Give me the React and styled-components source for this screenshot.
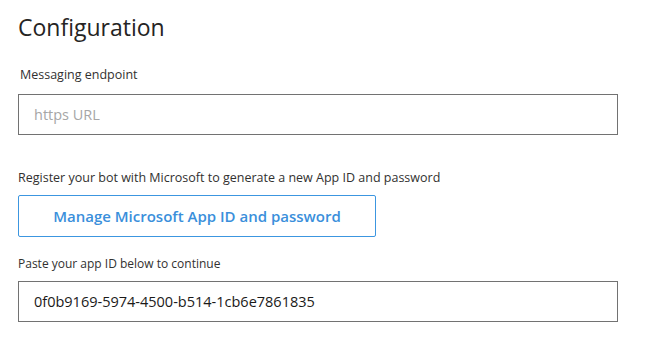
import React from "react";
import styled, { createGlobalStyle } from "styled-components";

const GlobalStyle = createGlobalStyle`
  body {
    margin: 0;
    background: #ffffff;
    font-family: "Open Sans", "Noto Sans", sans-serif;
    color: #252423;
  }
`;

const Page = styled.div`
  width: 600px;
  padding: 11px 0 0 18px;
  display: flex;
  flex-direction: column;
`;

const Title = styled.h1`
  margin: 0;
  font-size: 23px;
  font-weight: 400;
  line-height: 32px;
  color: #252423;
`;

const Label = styled.label`
  display: block;
  font-size: ${(p) => p.$size || "12.5px"};
  line-height: 18px;
  color: #323130;
  margin: ${(p) => p.$margin || "0"};
`;

const Field = styled.div`
  box-sizing: border-box;
  width: 600px;
  height: 41px;
  border: 1px solid #727272;
  display: flex;
  align-items: center;
  padding: 0 15px;
  font-size: 14.5px;
  color: ${(p) => (p.$placeholder ? "#a6a6a6" : "#1b1a19")};
`;

const ManageButton = styled.button`
  box-sizing: border-box;
  width: 358px;
  height: 42px;
  margin-top: 8px;
  border: 1px solid #3c96e0;
  border-radius: 2px;
  background: #ffffff;
  color: #3a8fdb;
  font-family: "Open Sans", "Noto Sans", sans-serif;
  font-size: 15px;
  font-weight: 600;
  cursor: pointer;
`;

export default function App() {
  return (
    <>
      <GlobalStyle />
      <Page>
        <Title>Configuration</Title>
        <Label $margin="23px 0 10px 2px">Messaging endpoint</Label>
        <Field $placeholder>https URL</Field>
        <Label $margin="34px 0 0 0">
          Register your bot with Microsoft to generate a new App ID and password
        </Label>
        <ManageButton>Manage Microsoft App ID and password</ManageButton>
        <Label $margin="18px 0 8px 0" $size="12px">
          Paste your app ID below to continue
        </Label>
        <Field>0f0b9169-5974-4500-b514-1cb6e7861835</Field>
      </Page>
    </>
  );
}
